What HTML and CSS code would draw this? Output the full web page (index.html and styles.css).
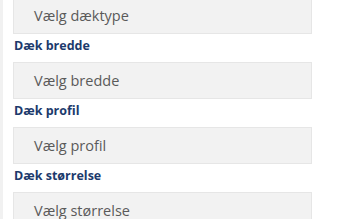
FILE: index.html
```html
<!DOCTYPE html>
<html lang="da">
<head>
    <meta charset="UTF-8">
    <meta name="viewport" content="width=device-width, initial-scale=1.0">
    <title>Find dæk</title>
    <link rel="stylesheet" href="styles.css">
</head>
<body>

    <div class="page">
        <!-- Tyre search form -->
        <form class="tyre-form">
            <div class="field">
                <div class="select">Vælg dæktype</div>
            </div>
            <div class="field">
                <label class="field-label">Dæk bredde</label>
                <div class="select">Vælg bredde</div>
            </div>
            <div class="field">
                <label class="field-label">Dæk profil</label>
                <div class="select">Vælg profil</div>
            </div>
            <div class="field">
                <label class="field-label">Dæk størrelse</label>
                <div class="select">Vælg størrelse</div>
            </div>
        </form>
    </div>

</body>
</html>
```

FILE: styles.css
```css
body {
    margin: 0;
    font-family: "Open Sans", Arial, sans-serif;
    background-color: #ffffff;
    overflow: hidden;
}
.page {
    border-left: 3px solid #f1f1f1;
    padding-left: 10px;
    width: 299px;
}
.tyre-form {
    margin-top: -3px;
}
.field-label {
    display: block;
    margin: 4px 0 8px 1px;
    font-size: 12.5px;
    line-height: 16px;
    font-weight: bold;
    color: #1c3a6c;
}
.select {
    box-sizing: border-box;
    height: 37px;
    padding: 0 20px;
    line-height: 36px;
    background-color: #f2f2f2;
    border: 1px solid #e6e6e6;
    color: #5a5a5a;
    font-size: 14.5px;
}
```
